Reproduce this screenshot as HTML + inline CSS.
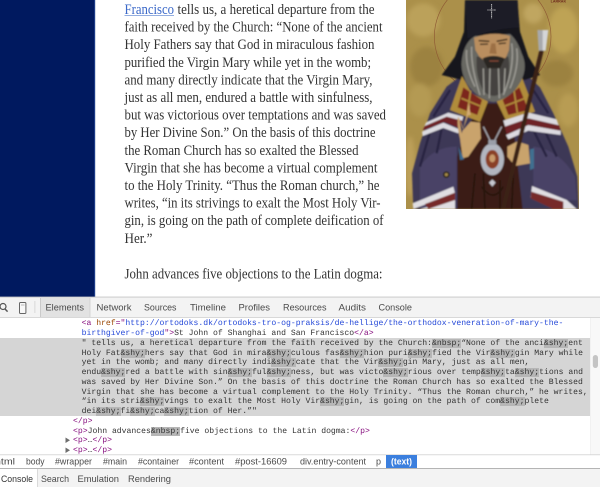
<!DOCTYPE html>
<html><head><meta charset="utf-8"><style>
html,body{margin:0;padding:0;background:#fff;width:600px;height:487px;overflow:hidden}
#root{position:relative;width:600px;height:487px;overflow:hidden;filter:blur(.3px)}
svg{position:absolute;left:0;top:0}
.serif text{font-family:"Liberation Serif",serif;font-size:14.7px;fill:#333}
.ui text{font-family:"Liberation Sans",sans-serif;font-size:9.2px;fill:#4a4a4a}
#dom{position:absolute;left:0;top:318.3px;width:590px;font-family:"Liberation Mono",monospace;font-size:8.12px;line-height:11.7px;color:#333;text-rendering:geometricPrecision}
#dom div{height:9.75px;padding-left:81.6px;white-space:pre}
#dom div.o{padding-left:73px}
#dom .s{background:#d5d5d5}
#dom i{font-style:normal;background:#b6b6b6}
#dom b{font-weight:normal;color:#881280}
#dom u{text-decoration:none;color:#994500}
#dom a{color:#2448d8;text-decoration:none}
</style></head><body><div id="root">
<svg width="600" height="487" viewBox="0 0 600 487">
<defs><filter id="b"><feGaussianBlur stdDeviation="7"/></filter><filter id="c"><feGaussianBlur stdDeviation="2"/></filter></defs>
<rect x="0" y="0" width="94" height="297" fill="#00195f"/>
<rect x="94" y="0" width="1.2" height="297" fill="#1b3a86"/>
<g class="serif">
<text x="124.5" y="14" textLength="49.5" lengthAdjust="spacingAndGlyphs" style="fill:#3a68c8">Francisco</text>
<rect x="124.5" y="15.2" width="49.5" height=".8" fill="#7a9ad8"/>
<text x="177.5" y="14" textLength="197" lengthAdjust="spacingAndGlyphs">tells us, a heretical departure from the</text>
<text x="124.5" y="31.6" textLength="258" lengthAdjust="spacingAndGlyphs">faith received by the Church: “None of the ancient</text>
<text x="124.5" y="49.2" textLength="250" lengthAdjust="spacingAndGlyphs">Holy Fathers say that God in miraculous fashion</text>
<text x="124.5" y="66.8" textLength="246.5" lengthAdjust="spacingAndGlyphs">purified the Virgin Mary while yet in the womb;</text>
<text x="124.5" y="84.4" textLength="248" lengthAdjust="spacingAndGlyphs">and many directly indicate that the Virgin Mary,</text>
<text x="124.5" y="102" textLength="248" lengthAdjust="spacingAndGlyphs">just as all men, endured a battle with sinfulness,</text>
<text x="124.5" y="119.6" textLength="261.5" lengthAdjust="spacingAndGlyphs">but was victorious over temptations and was saved</text>
<text x="124.5" y="137.2" textLength="251" lengthAdjust="spacingAndGlyphs">by Her Divine Son.” On the basis of this doctrine</text>
<text x="124.5" y="154.8" textLength="234" lengthAdjust="spacingAndGlyphs">the Roman Church has so exalted the Blessed</text>
<text x="124.5" y="172.4" textLength="253" lengthAdjust="spacingAndGlyphs">Virgin that she has become a virtual complement</text>
<text x="124.5" y="190" textLength="255" lengthAdjust="spacingAndGlyphs">to the Holy Trinity. “Thus the Roman church,” he</text>
<text x="124.5" y="207.6" textLength="256" lengthAdjust="spacingAndGlyphs">writes, “in its strivings to exalt the Most Holy Vir-</text>
<text x="124.5" y="225.2" textLength="259" lengthAdjust="spacingAndGlyphs">gin, is going on the path of complete deification of</text>
<text x="124.5" y="242.8" textLength="28" lengthAdjust="spacingAndGlyphs">Her.”</text>
<text x="124.5" y="278.4" textLength="258" lengthAdjust="spacingAndGlyphs">John advances five objections to the Latin dogma:</text>
</g>
<!-- icon painting -->
<svg x="406" y="0" width="173" height="209" viewBox="18 0 519 627">
<rect x="18" y="0" width="519" height="627" fill="#ab904a"/>
<g filter="url(#b)">
<ellipse cx="70" cy="60" rx="50" ry="50" fill="#bba15a"/><ellipse cx="80" cy="200" rx="50" ry="60" fill="#9c8240"/>
<ellipse cx="490" cy="90" rx="45" ry="70" fill="#bea354"/><ellipse cx="470" cy="220" rx="50" ry="40" fill="#9c8240"/>
<ellipse cx="60" cy="300" rx="35" ry="50" fill="#b49a52"/><ellipse cx="505" cy="330" rx="30" ry="50" fill="#b89c52"/>
<ellipse cx="30" cy="500" rx="16" ry="90" fill="#bda05a"/><ellipse cx="400" cy="40" rx="30" ry="30" fill="#c0a660"/>
</g>
<circle cx="278" cy="110" r="175" fill="none" stroke="#8f5a34" stroke-width="2"/>
<text x="452" y="8" style="font-family:'Liberation Sans',sans-serif;font-size:11px;font-weight:bold;fill:#6e2a1c">LARRAK</text>
<g filter="url(#c)">
<path d="M40 627L36 520L60 430L90 340L140 260L190 222L370 215L420 262L460 340L505 440L532 530L536 627Z" fill="#3d3756"/>
<path d="M60 500Q100 440 170 440L170 627L60 627ZM400 440Q480 450 525 530L530 600L400 600Z" fill="#4a4366"/>
<path d="M100 360L60 500M130 360L110 460M420 360L470 470M395 380L440 470M150 270L100 350M400 270L445 340" stroke="#262240" stroke-width="7" fill="none"/>
<path d="M195 0L352 0L360 95L385 170L420 225L375 240L185 240L125 225L165 170L192 95Z" fill="#12121b"/>
<path d="M195 0L353 0L357 82Q280 85 203 115Z" fill="#1c1c27"/>
<path d="M172 627L172 470L190 410L240 310L320 310L345 420L368 627Z" fill="#3a1e16"/>
<path d="M215 627L225 520M255 627L250 520M300 627L300 540M335 627L340 520M245 560Q280 610 310 560" stroke="#27120c" stroke-width="5" fill="none"/>
<path d="M186 228L150 330L240 366L264 304L215 280Z" fill="#b08c3a"/>
<path d="M190 262L173 322L232 345L246 300Z" fill="#7c261f"/>
<path d="M364 228L405 335L320 366L290 304L340 280Z" fill="#b08c3a"/>
<path d="M358 262L385 330L325 345L308 300Z" fill="#7c261f"/>
<path d="M212 272L202 338M184 295L240 318M342 272L352 338M375 295L315 318" stroke="#b08c3a" stroke-width="5"/>
<path d="M78 368L145 338L190 350L186 364L145 352L72 382ZM66 395L130 368L178 388L175 400L130 384L68 408Z" fill="#dcdae0"/>
<path d="M74 378L140 350L186 362L180 385L132 366L68 392Z" fill="#6e2228"/>
<path d="M310 362L385 338L470 358L476 376L385 355L316 382ZM318 405L385 375L482 392L482 405L385 392L325 418Z" fill="#dcdae0"/>
<path d="M314 380L385 355L478 376L480 392L385 375L320 403Z" fill="#6e2228"/>
<path d="M38 610L160 560L165 580L40 627ZM60 627L165 598L165 627Z" fill="#e0dee2"/>
<path d="M75 612L165 578L165 600L85 627Z" fill="#772a2c"/>
<path d="M396 558L500 600L530 627L480 627L392 592Z" fill="#e0dee2"/>
<path d="M394 575L490 605L490 627L460 627L392 595Z" fill="#772a2c"/>
<path d="M225 108Q195 125 187 170Q178 210 200 250Q235 300 282 306Q335 295 362 245Q385 200 365 160Q352 120 330 102Z" fill="#686762"/>
<path d="M230 170Q225 230 252 275Q280 300 312 275Q335 225 325 170Z" fill="#45433f"/>
<path d="M200 150Q195 200 225 260M215 140Q212 200 240 285M350 145Q358 200 330 265M335 130Q345 200 310 285M270 195L268 295M295 195L298 295M250 205L252 285M315 205L312 280" stroke="#a09f98" stroke-width="4" fill="none"/>
<path d="M222 113Q280 92 330 108L327 150L318 172L295 190L262 190L238 170L226 150Z" fill="#b98e5e"/>
<path d="M236 122L268 124M290 124L322 118" stroke="#2f2218" stroke-width="4" fill="none"/>
<path d="M240 133L264 132M296 131L318 129" stroke="#3a2a1c" stroke-width="4"/>
<path d="M274 130L268 160L290 162L286 130" fill="#9c7044"/>
<path d="M248 175Q280 160 314 175L300 205L262 205Z" fill="#2a2623"/>
<path d="M268 183L296 183" stroke="#8a4a3a" stroke-width="3"/>
<path d="M176 350L185 400L205 345L212 308L200 345L190 385ZM180 415Q170 380 174 350L190 390L212 365L240 368L243 415L205 470L188 475Z" fill="#c9a36c"/>
<path d="M206 308L200 345L212 345Z" fill="#d2ab74"/>
<path d="M176 440L192 478L180 480Z" fill="#3a6c90"/>
<path d="M322 440L352 424L385 435L390 490L345 498L322 470Z" fill="#c9a36c"/>
<path d="M390 448L402 445L402 505L390 510Z" fill="#3f7090"/>
<path d="M250 380L272 425M305 380L282 425" stroke="#a8a8b0" stroke-width="4"/>
<path d="M425 150L310 625" stroke="#3b2115" stroke-width="13"/>
<path d="M412 90L445 90L437 152L416 152Z" fill="#a7a9ac"/>
<path d="M428 90L445 90L437 152L428 152Z" fill="#d4d6d8"/>
<ellipse cx="277" cy="478" rx="35" ry="48" fill="#b2b6c0"/>
<ellipse cx="277" cy="478" rx="20" ry="28" fill="#8a3f26"/>
<ellipse cx="277" cy="475" rx="9" ry="12" fill="#c89a6a"/>
<rect x="265" y="420" width="24" height="15" fill="#9a9ea8"/>
<path d="M277 538L287 548L277 560L267 548Z" fill="#c6c8d0"/>
<circle cx="139" cy="524" r="10" fill="#2a2418"/><circle cx="139" cy="524" r="5" fill="#a58a4a"/>
</g>
<path d="M275 12V56M262 30H288" stroke="#d8d8d8" stroke-width="2.5" stroke-dasharray="3 1"/>
</svg>
<!-- devtools chrome -->
<g class="ui">
<rect x="0" y="297" width="600" height="190" fill="#fff"/>
<rect x="0" y="296.6" width="600" height="1" fill="#c6c6c6"/>
<rect x="0" y="297.6" width="600" height="19.6" fill="#f3f3f3"/>
<rect x="0" y="317" width="600" height=".8" fill="#cfcfcf"/>
<rect x="40.5" y="298" width="49.5" height="19" fill="#e2e2e2"/>
<rect x="40" y="298" width=".8" height="19" fill="#c4c4c4"/>
<rect x="89.6" y="298" width=".8" height="19" fill="#cfcfcf"/>
<rect x="34.5" y="301" width=".8" height="12" fill="#d2d2d2"/>
<circle cx="3" cy="306.5" r="3" fill="none" stroke="#555" stroke-width="1.2"/>
<path d="M5 309L7.6 311.6" stroke="#555" stroke-width="1.5"/>
<rect x="19.5" y="302.5" width="6.4" height="11" rx="1" fill="#f8f8f8" stroke="#666" stroke-width="1"/>
<path d="M21 305L24.5 305" stroke="#aaa" stroke-width=".8"/>
<text x="45.5" y="310.5" textLength="38.5" lengthAdjust="spacingAndGlyphs">Elements</text>
<text x="96.5" y="310.5" textLength="35" lengthAdjust="spacingAndGlyphs">Network</text>
<text x="144" y="310.5" textLength="32.5" lengthAdjust="spacingAndGlyphs">Sources</text>
<text x="190" y="310.5" textLength="36" lengthAdjust="spacingAndGlyphs">Timeline</text>
<text x="238.5" y="310.5" textLength="31.5" lengthAdjust="spacingAndGlyphs">Profiles</text>
<text x="283" y="310.5" textLength="43.5" lengthAdjust="spacingAndGlyphs">Resources</text>
<text x="338.5" y="310.5" textLength="27.5" lengthAdjust="spacingAndGlyphs">Audits</text>
<text x="378.5" y="310.5" textLength="33.5" lengthAdjust="spacingAndGlyphs">Console</text>
<rect x="590" y="318" width="10" height="136.5" fill="#f8f8f8"/>
<rect x="590" y="318" width=".7" height="136.5" fill="#eee"/>
<rect x="592.8" y="355" width="5.2" height="13" rx="2.6" fill="#c4c4c4"/>
<path d="M65.5 437.5L65.5 443L70 440.2ZM65.5 447.5L65.5 453L70 450.2Z" fill="#6e6e6e"/>
<rect x="0" y="454.4" width="600" height=".8" fill="#d0d0d0"/>
<rect x="0" y="468" width="600" height="1" fill="#b4b4b4"/>
<rect x="0" y="469" width="600" height="18" fill="#f3f3f3"/>
<rect x="0" y="469" width="37" height="18" fill="#fff"/>
<rect x="37" y="469" width=".8" height="18" fill="#d4d4d4"/>
<rect x="386" y="455" width="31" height="13" fill="#3b7fde"/>
<g style="font-size:8.8px">
<text x="-5" y="464.5" textLength="20" lengthAdjust="spacingAndGlyphs">html</text>
<text x="26" y="464.5" textLength="18.5" lengthAdjust="spacingAndGlyphs">body</text>
<text x="55" y="464.5" textLength="37" lengthAdjust="spacingAndGlyphs">#wrapper</text>
<text x="103" y="464.5" textLength="24" lengthAdjust="spacingAndGlyphs">#main</text>
<text x="138" y="464.5" textLength="41" lengthAdjust="spacingAndGlyphs">#container</text>
<text x="189" y="464.5" textLength="35" lengthAdjust="spacingAndGlyphs">#content</text>
<text x="235" y="464.5" textLength="52" lengthAdjust="spacingAndGlyphs">#post-16609</text>
<text x="300" y="464.5" textLength="66" lengthAdjust="spacingAndGlyphs">div.entry-content</text>
<text x="376" y="464.5" textLength="5" lengthAdjust="spacingAndGlyphs">p</text>
<text x="391" y="464.5" textLength="21" lengthAdjust="spacingAndGlyphs" style="fill:#fff;font-weight:bold">(text)</text>
</g>
<text x="1" y="482" textLength="32" lengthAdjust="spacingAndGlyphs" style="fill:#333">Console</text>
<text x="41" y="482" textLength="28" lengthAdjust="spacingAndGlyphs">Search</text>
<text x="77.5" y="482" textLength="41.5" lengthAdjust="spacingAndGlyphs">Emulation</text>
<text x="128" y="482" textLength="43" lengthAdjust="spacingAndGlyphs">Rendering</text>
</g>
</svg>
<div id="dom"><div><b>&lt;a</b> <u>href</u><b>="</b><a>http://ortodoks.dk/ortodoks-tro-og-praksis/de-hellige/the-orthodox-veneration-of-mary-the-</a></div><div><a>birthgiver-of-god</a><b>"&gt;</b>St John of Shanghai and San Francisco<b>&lt;/a&gt;</b></div><div class="s">" tells us, a heretical departure from the faith received by the Church:<i>&amp;nbsp;</i>“None of the anci<i>&amp;shy;</i>ent</div><div class="s">Holy Fat<i>&amp;shy;</i>hers say that God in mira<i>&amp;shy;</i>culous fas<i>&amp;shy;</i>hion puri<i>&amp;shy;</i>fied the Vir<i>&amp;shy;</i>gin Mary while</div><div class="s">yet in the womb; and many directly indi<i>&amp;shy;</i>cate that the Vir<i>&amp;shy;</i>gin Mary, just as all men,</div><div class="s">endu<i>&amp;shy;</i>red a battle with sin<i>&amp;shy;</i>ful<i>&amp;shy;</i>ness, but was victo<i>&amp;shy;</i>rious over temp<i>&amp;shy;</i>ta<i>&amp;shy;</i>tions and</div><div class="s">was saved by Her Divine Son.” On the basis of this doctrine the Roman Church has so exalted the Blessed</div><div class="s">Virgin that she has become a virtual complement to the Holy Trinity. “Thus the Roman church,” he writes,</div><div class="s">“in its stri<i>&amp;shy;</i>vings to exalt the Most Holy Vir<i>&amp;shy;</i>gin, is going on the path of com<i>&amp;shy;</i>plete</div><div class="s">dei<i>&amp;shy;</i>fi<i>&amp;shy;</i>ca<i>&amp;shy;</i>tion of Her.”"</div><div class="o"><b>&lt;/p&gt;</b></div><div class="o"><b>&lt;p&gt;</b>John advances<i>&amp;nbsp;</i>five objections to the Latin dogma:<b>&lt;/p&gt;</b></div><div class="o"><b>&lt;p&gt;</b>…<b>&lt;/p&gt;</b></div><div class="o"><b>&lt;p&gt;</b>…<b>&lt;/p&gt;</b></div></div>
</div></body></html>
